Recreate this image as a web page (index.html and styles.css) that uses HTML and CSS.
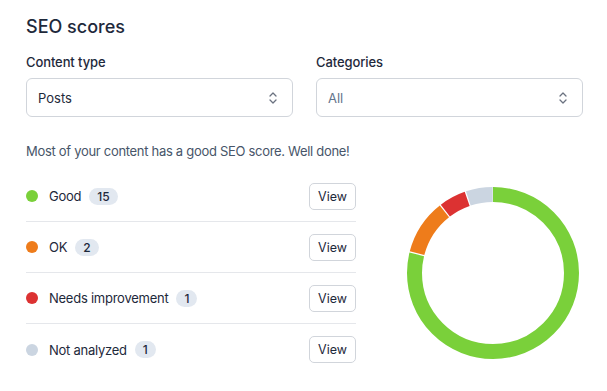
FILE: index.html
```html
<!DOCTYPE html>
<html lang="en">
<head>
    <meta charset="UTF-8">
    <meta name="viewport" content="width=device-width, initial-scale=1.0">
    <title>SEO scores</title>
    <link rel="stylesheet" href="styles.css">
</head>
<body>
    <div class="widget">
        <h2 class="widget-title">SEO scores</h2>

        <div class="filters">
            <div class="field">
                <label class="field-label">Content type</label>
                <div class="select">
                    <span class="select-value">Posts</span>
                    <svg class="select-icon" width="10" height="16" viewBox="0 0 10 16" fill="none">
                        <path d="M2 6l3-3 3 3M2 10l3 3 3-3" stroke="currentColor" stroke-width="1.3" stroke-linecap="round" stroke-linejoin="round"/>
                    </svg>
                </div>
            </div>
            <div class="field">
                <label class="field-label">Categories</label>
                <div class="select">
                    <span class="select-value muted">All</span>
                    <svg class="select-icon" width="10" height="16" viewBox="0 0 10 16" fill="none">
                        <path d="M2 6l3-3 3 3M2 10l3 3 3-3" stroke="currentColor" stroke-width="1.3" stroke-linecap="round" stroke-linejoin="round"/>
                    </svg>
                </div>
            </div>
        </div>

        <p class="summary">Most of your content has a good SEO score. Well done!</p>

        <div class="scores">
            <ul class="score-list">
                <li class="score-row">
                    <span class="dot good"></span>
                    <span class="score-label">Good</span>
                    <span class="badge">15</span>
                    <button class="view-btn">View</button>
                </li>
                <li class="score-row">
                    <span class="dot ok"></span>
                    <span class="score-label">OK</span>
                    <span class="badge">2</span>
                    <button class="view-btn">View</button>
                </li>
                <li class="score-row">
                    <span class="dot bad"></span>
                    <span class="score-label">Needs improvement</span>
                    <span class="badge">1</span>
                    <button class="view-btn">View</button>
                </li>
                <li class="score-row">
                    <span class="dot none"></span>
                    <span class="score-label">Not analyzed</span>
                    <span class="badge">1</span>
                    <button class="view-btn">View</button>
                </li>
            </ul>

            <div class="chart">
                <svg width="172" height="172" viewBox="0 0 172 172">
                    <g transform="rotate(-90 86 86)" fill="none" stroke-width="15">
                        <circle cx="86" cy="86" r="78.5" stroke="#7ad03a" stroke-dasharray="388.2 493.2" stroke-dashoffset="0"/>
                        <circle cx="86" cy="86" r="78.5" stroke="#ee7c1b" stroke-dasharray="50.7 493.2" stroke-dashoffset="-389.4"/>
                        <circle cx="86" cy="86" r="78.5" stroke="#dc3232" stroke-dasharray="24.8 493.2" stroke-dashoffset="-441.3"/>
                        <circle cx="86" cy="86" r="78.5" stroke="#cbd5e1" stroke-dasharray="24.8 493.2" stroke-dashoffset="-467.3"/>
                    </g>
                </svg>
            </div>
        </div>
    </div>
</body>
</html>
```

FILE: styles.css
```css
* {
    margin: 0;
    padding: 0;
    box-sizing: border-box;
}

body {
    font-family: 'Inter', 'Noto Sans', 'Liberation Sans', sans-serif;
    background: #ffffff;
    color: #1e293b;
}

.widget {
    padding: 16px 24px 0 26px;
}

.widget-title {
    font-size: 18px;
    font-weight: 500;
    line-height: 22px;
    color: #1e293b;
    margin-bottom: 16px;
}

.filters {
    display: grid;
    grid-template-columns: 1fr 1fr;
    gap: 23px;
}

.field-label {
    display: block;
    font-size: 13px;
    font-weight: 500;
    line-height: 16px;
    letter-spacing: -0.1px;
    color: #1e293b;
    margin-bottom: 8px;
}

.select {
    height: 39px;
    border: 1px solid #d1d5db;
    border-radius: 6px;
    display: flex;
    align-items: center;
    justify-content: space-between;
    padding: 0 14px 0 11px;
}

.select-value {
    font-size: 13px;
    color: #1e293b;
}

.select-value.muted {
    color: #64748b;
}

.select-icon {
    color: #6b7280;
}

.summary {
    font-size: 13px;
    line-height: 16px;
    letter-spacing: -0.3px;
    color: #475569;
    margin-top: 26px;
    margin-bottom: 12px;
}

.scores {
    display: flex;
    align-items: center;
}

.score-list {
    list-style: none;
    width: 330px;
}

.score-row {
    display: flex;
    align-items: center;
    height: 51px;
    border-bottom: 1px solid #e5e7eb;
}

.score-row:last-child {
    border-bottom: none;
}

.dot {
    width: 12px;
    height: 12px;
    border-radius: 50%;
    margin-right: 11px;
}

.dot.good { background: #7ad03a; }
.dot.ok { background: #ee7c1b; }
.dot.bad { background: #dc3232; }
.dot.none { background: #cbd5e1; }

.score-label {
    font-size: 13px;
    letter-spacing: -0.25px;
    color: #1e293b;
}

.badge {
    margin-left: 8px;
    min-width: 21px;
    height: 17px;
    padding: 0 8px;
    border-radius: 9px;
    background: #e2e8f0;
    font-size: 12px;
    font-weight: 500;
    line-height: 17px;
    text-align: center;
    color: #1e293b;
}

.view-btn {
    margin-left: auto;
    width: 47px;
    height: 27px;
    border: 1px solid #d1d5db;
    border-radius: 5px;
    background: #fff;
    font-family: inherit;
    font-size: 12.5px;
    font-weight: 400;
    color: #1e293b;
}

.chart {
    margin-left: 51px;
    display: flex;
}
```
